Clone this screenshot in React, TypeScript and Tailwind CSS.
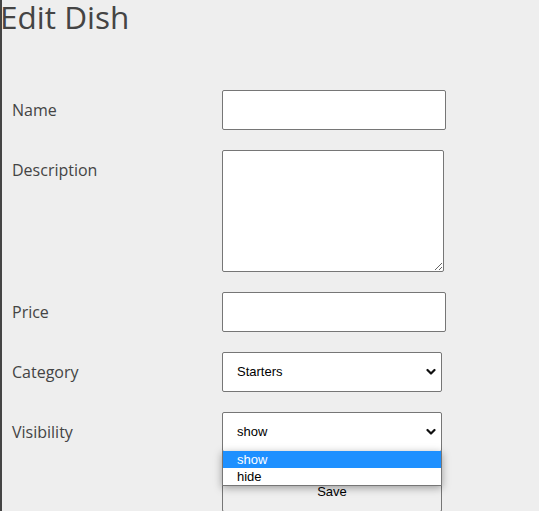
import { ReactElement } from "react";

const labelCls =
  "pl-[10px] pt-2 text-[16px] leading-6 text-[#444] font-['Open_Sans',sans-serif]";
const fieldCls =
  "block bg-white border border-[#767676] rounded-[2px] outline-none";

function Chevron(): ReactElement {
  return (
    <svg
      className="absolute right-[6px] top-1/2 -translate-y-1/2 pointer-events-none"
      width="10"
      height="7"
      viewBox="0 0 10 7"
    >
      <polyline
        points="1.5,1.5 5,5 8.5,1.5"
        fill="none"
        stroke="#111"
        strokeWidth="2.2"
        strokeLinecap="round"
        strokeLinejoin="round"
      />
    </svg>
  );
}

function Select({ value }: { value: string }): ReactElement {
  return (
    <div className="relative w-[220px] h-10">
      <div
        className={`${fieldCls} w-full h-full pl-[14px] flex items-center text-[13px] text-black font-['Liberation_Sans',Arial,sans-serif]`}
      >
        {value}
      </div>
      <Chevron />
    </div>
  );
}

export default function App(): ReactElement {
  return (
    <div className="relative w-[539px] h-[511px] bg-[#eeeeee] border-l-2 border-[#444]">
      {/* Title */}
      <h1 className="-ml-[2px] text-[31.5px] leading-[34px] text-[#444] font-['Open_Sans',sans-serif]">
        Edit Dish
      </h1>

      {/* Form */}
      <div className="mt-[56px] grid grid-cols-[220px_1fr] gap-y-5">
        <div className={labelCls}>Name</div>
        <div className={`${fieldCls} w-[224px] h-10`} />

        <div className={labelCls}>Description</div>
        <textarea
          className={`${fieldCls} w-[222px] h-[122px] resize`}
          defaultValue=""
        />

        <div className={labelCls}>Price</div>
        <div className={`${fieldCls} w-[224px] h-10`} />

        <div className={labelCls}>Category</div>
        <Select value="Starters" />

        <div className={labelCls}>Visibility</div>
        <Select value="show" />

        <div />
        <div className="w-[220px] h-10 border border-[#767676] rounded-[2px] bg-[#efefef] flex items-center justify-center text-[13px] text-black font-['Liberation_Sans',Arial,sans-serif]">
          Save
        </div>
      </div>

      {/* Open dropdown list for Visibility */}
      <div className="absolute left-[220px] top-[451px] w-[220px] bg-white border border-t-0 border-[#767676] shadow-[0_2px_8px_rgba(0,0,0,0.35)] text-[13px] leading-[17px] font-['Liberation_Sans',Arial,sans-serif]">
        <div className="bg-[#1e90ff] text-white pl-[14px]">show</div>
        <div className="text-black pl-[14px]">hide</div>
      </div>
    </div>
  );
}
